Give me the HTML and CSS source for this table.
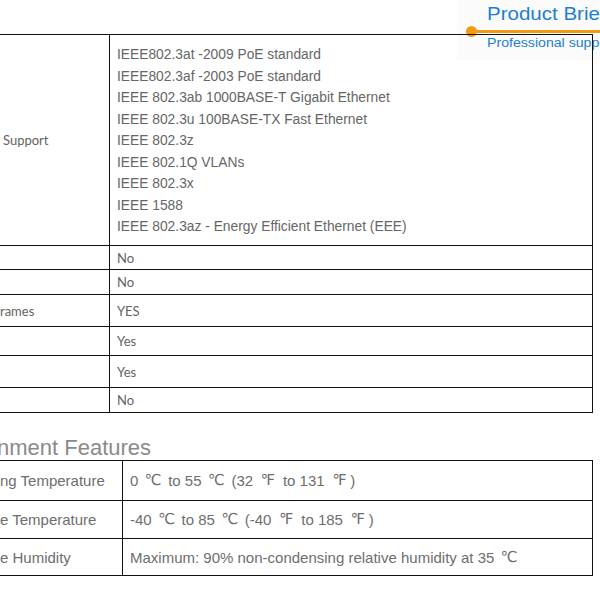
FILE: index.html
```html
<!DOCTYPE html>
<html>
<head>
<meta charset="utf-8">
<link rel="stylesheet" href="styles.css">
</head>
<body>
<div class="page">
  <div class="brief">
    <div class="brief-title">Product Brief</div>
    <div class="brief-rule"><span class="brief-dot"></span></div>
    <div class="brief-sub">Professional support</div>
  </div>

  <div class="spec spec-main">
    <div class="row r-std">
      <div class="label">Support</div>
      <div class="value list">
        <div>IEEE802.3at -2009 PoE standard</div>
        <div>IEEE802.3af -2003 PoE standard</div>
        <div>IEEE 802.3ab 1000BASE-T Gigabit Ethernet</div>
        <div>IEEE 802.3u 100BASE-TX Fast Ethernet</div>
        <div>IEEE 802.3z</div>
        <div>IEEE 802.1Q VLANs</div>
        <div>IEEE 802.3x</div>
        <div>IEEE 1588</div>
        <div>IEEE 802.3az - Energy Efficient Ethernet (EEE)</div>
      </div>
    </div>
    <div class="row r-a"><div class="label"></div><div class="value">No</div></div>
    <div class="row r-b"><div class="label"></div><div class="value">No</div></div>
    <div class="row r-c"><div class="label tight">rames</div><div class="value">YES</div></div>
    <div class="row r-d"><div class="label"></div><div class="value">Yes</div></div>
    <div class="row r-e"><div class="label"></div><div class="value">Yes</div></div>
    <div class="row r-f last"><div class="label"></div><div class="value">No</div></div>
  </div>

  <h2 class="section">nment Features</h2>

  <div class="spec spec-env">
    <div class="row e-a"><div class="label">ng Temperature</div><div class="value">0 <span class="unit">℃</span> to 55 <span class="unit">℃</span> (32 <span class="unit">℉</span> to 131 <span class="unit">℉</span>)</div></div>
    <div class="row e-b"><div class="label">e Temperature</div><div class="value">-40 <span class="unit">℃</span> to 85 <span class="unit">℃</span> (-40 <span class="unit">℉</span> to 185 <span class="unit">℉</span>)</div></div>
    <div class="row e-c last"><div class="label">e Humidity</div><div class="value">Maximum: 90% non-condensing relative humidity at 35 <span class="unit">℃</span></div></div>
  </div>
</div>
</body>
</html>
```
FILE: styles.css
```css
html, body {
  margin: 0;
  padding: 0;
  background: #fff;
  overflow: hidden;
}
.page {
  position: relative;
  z-index: 0;
  width: 600px;
  height: 592px;
  overflow: hidden;
  padding-top: 34px;
  box-sizing: border-box;
}

/* header overlay */
.brief {
  position: absolute;
  top: 0;
  left: 457px;
  width: 200px;
  height: 60px;
  background: #fbfbfb;
  z-index: -1;
  font-family: "Liberation Sans", Arial, sans-serif;
  color: #1b80cf;
  white-space: nowrap;
}
.brief-title {
  position: absolute;
  left: 30px;
  top: 3px;
  font-size: 18px;
  line-height: 22px;
  transform: scaleX(1.14);
  transform-origin: left center;
}
.brief-rule {
  position: absolute;
  left: 12px;
  top: 30px;
  width: 200px;
  height: 3px;
  background: #f39a14;
}
.brief-dot {
  position: absolute;
  left: -3px;
  top: -4px;
  width: 11px;
  height: 11px;
  border-radius: 50%;
  background: #f39a14;
}
.brief-sub {
  position: absolute;
  left: 30px;
  top: 35px;
  font-size: 12.5px;
  line-height: 16px;
  transform: scaleX(1.13);
  transform-origin: left center;
}

/* spec tables */
.spec {
  margin-left: -20px;
  width: 613px;
  border-right: 1px solid #111;
  box-sizing: border-box;
}
.row {
  display: flex;
  border-top: 1px solid #111;
  box-sizing: border-box;
}
.row.last {
  border-bottom: 1px solid #111;
}
.label {
  flex: none;
  border-right: 1px solid #111;
  box-sizing: border-box;
  display: flex;
  align-items: center;
  white-space: nowrap;
  overflow: hidden;
}
.value {
  flex: 1;
  display: flex;
  align-items: center;
  padding-left: 7px;
  white-space: pre;
}

.spec-main .label {
  width: 130px;
  padding-left: 23px;
  font-family: Lato, "Open Sans", sans-serif;
  font-size: 13px;
  color: #636363;
}
.spec-main .label.tight {
  padding-left: 20px;
}
.spec-main .value {
  font-family: Lato, "Open Sans", sans-serif;
  font-size: 13px;
  color: #636363;
}
.spec-main .value.list {
  flex-direction: column;
  align-items: flex-start;
  justify-content: center;
  font-family: "Liberation Sans", Arial, sans-serif;
  font-size: 13.8px;
  line-height: 21.5px;
  color: #666;
  padding-top: 2px;
}
.r-std { height: 211px; }
.r-a { height: 24px; }
.r-b { height: 25px; }
.r-c { height: 32px; }
.r-d { height: 29px; }
.r-e { height: 32px; }
.r-f { height: 26px; }

.section {
  margin: 22px 0 0 -3px;
  height: 25px;
  font-family: "Liberation Sans", Arial, sans-serif;
  font-weight: normal;
  font-size: 22px;
  line-height: 25px;
  color: #8a8a8a;
  white-space: nowrap;
}

.spec-env .label {
  width: 143px;
  padding-left: 20px;
  font-family: "Liberation Sans", Arial, sans-serif;
  font-size: 15px;
  color: #6e6e6e;
}
.spec-env .value {
  font-family: "Liberation Sans", Arial, sans-serif;
  font-size: 15px;
  color: #6e6e6e;
}
.unit {
  display: inline-block;
  width: 21.5px;
  text-align: center;
  font-family: "DejaVu Sans", sans-serif;
  font-size: 15px;
  line-height: 1;
}
.e-a { height: 40px; }
.e-b { height: 38px; }
.e-c { height: 38px; }
```
